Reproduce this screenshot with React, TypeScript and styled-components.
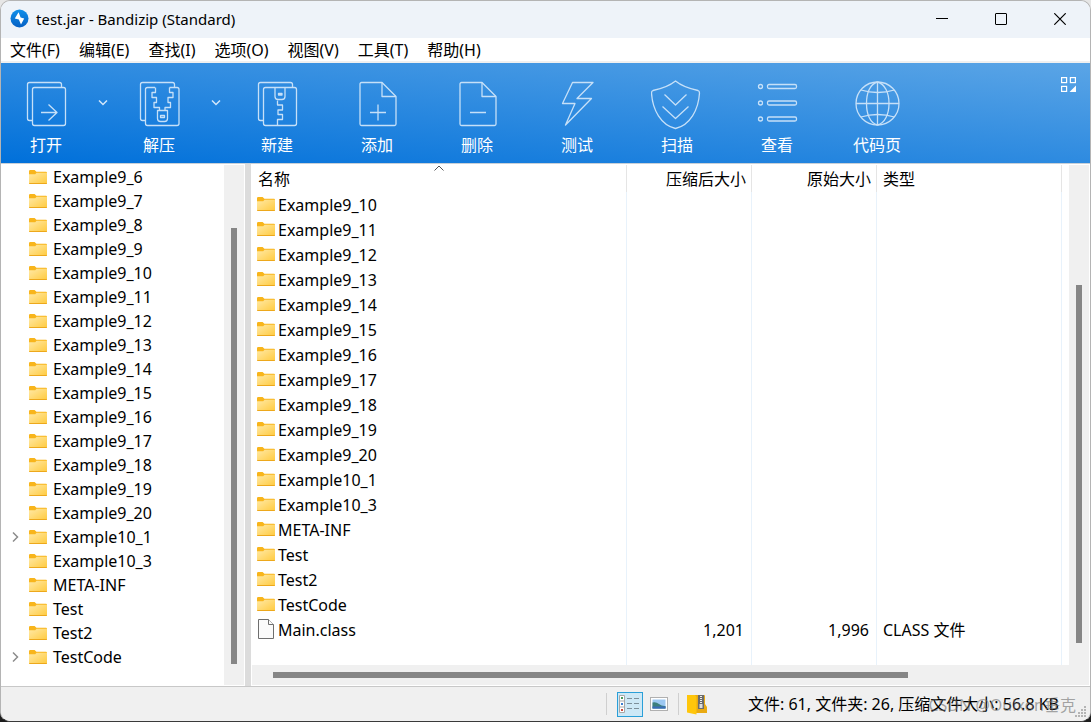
import React from "react";
import styled, { createGlobalStyle } from "styled-components";

const GlobalStyle = createGlobalStyle`
  *, *::before, *::after { box-sizing: border-box; }
  body {
    margin: 0;
    background: linear-gradient(#e6e6e6 0 50%, #1c1c1c 50% 100%);
    color: #000;
    font: 16px/24px "Noto Sans", "Noto Sans CJK SC", sans-serif;
  }
  button {
    margin: 0;
    padding: 0;
    border: 0;
    background: none;
    color: inherit;
    font: inherit;
  }
  svg { display: block; flex: none; }
`;

const Window = styled.div`
  display: flex;
  flex-direction: column;
  height: 100vh;
  overflow: hidden;
  border: 1px solid #b4b4b4;
  border-bottom-color: #3a3a3a;
  border-radius: 10px;
  background: #efefef;
`;

const TitleBar = styled.header`
  display: flex;
  align-items: center;
  flex: none;
  height: 37px;
  padding: 0 1px 2px 9px;
  background: #eef3f9;
`;

const Title = styled.h1`
  flex: 1;
  margin: 0 0 0 7px;
  font-size: 15px;
  line-height: 24px;
  font-weight: 400;
`;

const WindowButton = styled.button`
  display: grid;
  place-items: center;
  width: 59px;
  height: 34px;
`;

const MenuBar = styled.nav`
  display: flex;
  flex: none;
  gap: 1px;
  height: 25px;
  background: #fff;
  border-bottom: 2px solid #f0f0f0;
`;

const MenuItem = styled.button`
  padding: 0 9px;
  white-space: nowrap;
`;

const ToolBar = styled.div`
  display: flex;
  flex: none;
  height: 101px;
  background: linear-gradient(to top right, #0070da, #5ba5e6);
  border-bottom: 1px solid #c8d0d8;
  color: #fff;
`;

const ToolButton = styled.button<{ $narrow?: boolean }>`
  display: flex;
  flex-direction: column;
  align-items: center;
  gap: 3px;
  width: ${(p) => (p.$narrow ? 90 : 100)}px;
  padding-top: 15px;
`;

const DropButton = styled.button`
  display: grid;
  justify-items: center;
  align-content: start;
  width: 23px;
  padding-top: 36px;
`;

const LayoutButton = styled.button`
  align-self: flex-start;
  margin: 14px 14px 0 auto;
`;

const Body = styled.main`
  display: flex;
  flex: 1;
  min-height: 0;
  background: #fff;
`;

const TreePane = styled.aside`
  display: flex;
  flex: none;
  width: 244px;
  padding: 0 1px 1px 0;
`;

const Tree = styled.ul`
  flex: 1;
  margin: 0;
  padding: 1px 0 0 8px;
  list-style: none;
  overflow: hidden;
`;

const TreeItem = styled.li`
  display: flex;
  align-items: center;
  height: 24px;
`;

const Toggle = styled.span`
  display: grid;
  place-items: center;
  width: 12px;
  margin-right: 8px;
`;

const TreeLabel = styled.span`
  margin-left: 6px;
`;

const Track = styled.div<{ $before: number; $after: number; $across?: boolean }>`
  display: flex;
  flex: none;
  flex-direction: ${(p) => (p.$across ? "row" : "column")};
  ${(p) =>
    p.$across
      ? `height: 20px; padding: 7px ${p.$after}px 7px ${p.$before}px;`
      : `width: 20px; margin-top: 1px; padding: ${p.$before}px 7px ${p.$after}px;`}
  background: #f0f0f0;
`;

const Thumb = styled.div`
  flex: 1;
  background: #868686;
`;

const Splitter = styled.div`
  flex: none;
  width: 6px;
  background: #dcdcdc;
`;

const FilePane = styled.section`
  display: flex;
  flex: 1;
  min-width: 0;
  padding: 0 1px 1px;
`;

const FileColumn = styled.div`
  display: flex;
  flex: 1;
  flex-direction: column;
  min-width: 0;
`;

const ListArea = styled.div`
  flex: 1;
  min-height: 0;
  padding: 1px 7px 0 0;
  overflow: hidden;
`;

const FileTable = styled.table`
  width: 100%;
  height: 100%;
  table-layout: fixed;
  border-collapse: separate;
  border-spacing: 0;
`;

const Head = styled.th<{ $width?: number; $end?: boolean }>`
  position: relative;
  height: 27px;
  ${(p) => p.$width && `width: ${p.$width}px;`}
  padding: 1px 5px 0 6px;
  border-right: 1px solid #e5e5e5;
  font-weight: 400;
  line-height: 24px;
  text-align: ${(p) => (p.$end ? "right" : "left")};
`;

const SortMark = styled.svg`
  position: absolute;
  top: 0;
  left: calc(50% - 5px);
`;

const Cell = styled.td<{ $end?: boolean }>`
  height: 25px;
  padding: 0 7px 0 6px;
  border-right: 1px solid #e8f2fb;
  text-align: ${(p) => (p.$end ? "right" : "left")};
`;

const FillerCell = styled(Cell)`
  height: auto;
`;

const FileName = styled.span`
  display: flex;
  align-items: center;
  gap: 3px;
  height: 24px;
  margin-left: -1px;

  svg { margin-bottom: 2px; }
`;

const StatusBar = styled.footer`
  position: relative;
  display: flex;
  align-items: center;
  justify-content: flex-end;
  flex: none;
  height: 35px;
  padding-right: 31px;
  border-top: 1px solid #c8c8c8;
  background: #f0f0f0;
`;

const Divider = styled.span`
  width: 1px;
  height: 22px;
  background: #cfcfcf;
`;

const ViewButton = styled.button<{ $active?: boolean }>`
  display: grid;
  place-items: center;
  width: 26px;
  height: 25px;
  border: 1px solid ${(p) => (p.$active ? "#2a9fd8" : "transparent")};
  background: ${(p) => (p.$active ? "#cde8f6" : "transparent")};
`;

const StatusTools = styled.div`
  display: flex;
  align-items: center;
  gap: 5px;
  margin-right: 38px;
`;

const ViewSwitch = styled.div`
  display: flex;
  align-items: center;
  gap: 3px;
  margin: 0 1px 0 5px;
`;

const StatusText = styled.p`
  margin: 0;
  white-space: nowrap;
`;

const Watermark = styled.span`
  position: absolute;
  right: 14px;
  top: 6px;
  color: rgba(110, 110, 110, 0.6);
  white-space: nowrap;
`;

const ResizeGrip = styled.svg`
  position: absolute;
  right: 4px;
  bottom: 4px;
`;

const FolderIcon = () => (
  <svg width="18" height="14" viewBox="0 0 18 14" aria-hidden="true">
    <defs>
      <linearGradient id="folder" x1="0" y1="0" x2="1" y2="1">
        <stop offset="0" stopColor="#ffe9a6" />
        <stop offset="1" stopColor="#ffca3e" />
      </linearGradient>
    </defs>
    <path d="M0 1.2Q0 0 1.2 0H5.6L7.4 1.8H17Q18 1.8 18 3V6H0z" fill="#f8b51c" />
    <path d="M0 4.2H6.2L7.6 2.8H18V13.4Q18 14 17 14H1Q0 14 0 13.4z" fill="url(#folder)" />
    <path d="M0 13H18Q18 14 17 14H1Q0 14 0 13z" fill="#eda81c" />
  </svg>
);

const FileIcon = () => (
  <svg width="18" height="20" viewBox="0 0 18 20" fill="#fafafa" stroke="#6e6e6e" aria-hidden="true">
    <path d="M1.5.5H11.5L16.5 5.5V19.5H1.5z" />
    <path d="M11.5.5V5.5H16.5" />
  </svg>
);

const SheetStack = () => (
  <path d="M12.5 42.5h-3a2 2 0 0 1-2-2v-34a2 2 0 0 1 2-2h30a2 2 0 0 1 2 2v3" />
);

const Sheet = () => (
  <>
    <path d="M10.5 4.5H31L45 18.5V46a1.5 1.5 0 0 1-1.5 1.5H10.5A1.5 1.5 0 0 1 9 46V6a1.5 1.5 0 0 1 1.5-1.5" />
    <path d="M31 4.5V18.5H45" />
  </>
);

const drawings: Record<string, React.ReactNode> = {
  open: (
    <>
      <SheetStack />
      <rect x="12.5" y="9.5" width="33" height="38" rx="2" />
      <path d="M21 34.5H37M28.5 26.5L37 34.5L28.5 42.5" />
    </>
  ),
  extract: (
    <>
      <SheetStack />
      <path d="M22 9.5H14.5a2 2 0 0 0-2 2v34a2 2 0 0 0 2 2H44a2 2 0 0 0 2-2v-34a2 2 0 0 0-2-2H36.5" />
      <path d="M22.5 9.5v5h-3.5v5h4.5v5h-2.5v5h5.5v3M36.500 9.5v5h3.5v5h-5v5h2.5v5h-5.5v3" />
      <path d="M24.5 32.5h10v8a3 3 0 0 1-3 3h-4a3 3 0 0 1-3-3z" />
      <rect x="27.5" y="37.5" width="4" height="2" />
    </>
  ),
  create: (
    <>
      <SheetStack />
      <rect x="12.5" y="9.5" width="33" height="38" rx="2" />
      <path d="M24 9.5v9a3 3 0 0 0 3 3h4a3 3 0 0 0 3-3v-9" />
      <rect x="27.5" y="15.5" width="3.5" height="1.5" />
      <path d="M26.5 22.5v4.5h5v5h-4.5v4.5h4.5v5h-5v6" />
    </>
  ),
  add: (
    <>
      <Sheet />
      <path d="M19 34.5H35M27 26.5V42.5" />
    </>
  ),
  remove: (
    <>
      <Sheet />
      <path d="M19 34.5H35" />
    </>
  ),
  test: <path d="M21.5 4.5H42L26 20.5H40.5L14.5 47L24 25.5H11.5z" />,
  scan: (
    <>
      <path d="M24.5 3C19 7.5 9 11 2 12.5Q.5 13 .5 15C1.5 32 10 47 24.5 50.5C39 47 47.5 32 48.5 15Q48.5 13 47 12.5C40 11 30 7.5 24.5 3z" />
      <path d="M13.5 16.5L24.5 27L35.5 16.5M11.500 28.5L24.5 40.5L37.5 28.5" />
    </>
  ),
  view: (
    <>
      {[8.5, 25, 41].map((y) => (
        <g key={y}>
          <circle cx="9.5" cy={y} r="2" />
          <rect x="16.5" y={y - 2} width="29" height="4" rx="1.5" />
        </g>
      ))}
    </>
  ),
  codepage: (
    <>
      <circle cx="26.5" cy="25.5" r="21.5" />
      <path d="M26.5 4V47M5 25.5H48" />
      <path d="M26.5 4C19 6 15.5 15 15.5 25.5S19 45 26.5 47M26.5 4C34 6 38 15 38 25.5S34 45 26.5 47" />
      <path d="M10 12Q26.5 17 43.5 12M10 39Q26.5 34 43.5 39" />
    </>
  ),
};

const ToolIcon = ({ name }: { name: string }) => (
  <svg
    width="52"
    height="52"
    viewBox="0 0 52 52"
    fill="none"
    stroke="#c6e0f8"
    strokeWidth="1.3"
    strokeLinejoin="round"
    aria-hidden="true"
  >
    {drawings[name]}
  </svg>
);

const menus = ["文件(F)", "编辑(E)", "查找(I)", "选项(O)", "视图(V)", "工具(T)", "帮助(H)"];

const tools = [
  { name: "open", label: "打开", drop: true },
  { name: "extract", label: "解压", drop: true },
  { name: "create", label: "新建" },
  { name: "add", label: "添加" },
  { name: "remove", label: "删除" },
  { name: "test", label: "测试" },
  { name: "scan", label: "扫描" },
  { name: "view", label: "查看" },
  { name: "codepage", label: "代码页" },
];

const range = (from: number, to: number) =>
  Array.from({ length: to - from + 1 }, (_, i) => `Example9_${from + i}`);

const tail = ["Example10_1", "Example10_3", "META-INF", "Test", "Test2", "TestCode"];
const treeFolders = [...range(6, 20), ...tail];
const listFolders = [...range(10, 20), ...tail];
const expandable = ["Example10_1", "TestCode"];

export default function App() {
  return (
    <>
      <GlobalStyle />
      <Window>
        <TitleBar>
          <svg width="19" height="19" viewBox="0 0 19 19" aria-hidden="true">
            <defs>
              <linearGradient id="logo" x1="0" y1="0" x2="0" y2="1">
                <stop offset="0" stopColor="#1090ea" />
                <stop offset="1" stopColor="#0560c4" />
              </linearGradient>
            </defs>
            <circle cx="9.5" cy="9.5" r="9" fill="url(#logo)" />
            <path d="M8.6 3.2L4.8 9.4L8.8 10.4L11 15.6L14.2 9.4L10.6 8.4z" fill="#fff" />
          </svg>
          <Title>test.jar - Bandizip (Standard)</Title>
          <WindowButton aria-label="最小化">
            <svg width="12" height="12" viewBox="0 0 12 12" stroke="#000">
              <path d="M0 5.5H12" />
            </svg>
          </WindowButton>
          <WindowButton aria-label="最大化">
            <svg width="12" height="12" viewBox="0 0 12 12" fill="none" stroke="#000">
              <rect x=".5" y=".5" width="11" height="11" rx=".5" />
            </svg>
          </WindowButton>
          <WindowButton aria-label="关闭">
            <svg width="12" height="12" viewBox="0 0 12 12" stroke="#000" strokeWidth="1.2">
              <path d="M.3.3L11.7 11.7M11.7.3L.3 11.7" />
            </svg>
          </WindowButton>
        </TitleBar>

        <MenuBar>
          {menus.map((m) => (
            <MenuItem key={m}>{m}</MenuItem>
          ))}
        </MenuBar>

        <ToolBar>
          {tools.map((t) => (
            <React.Fragment key={t.name}>
              <ToolButton $narrow={t.drop}>
                <ToolIcon name={t.name} />
                {t.label}
              </ToolButton>
              {t.drop && (
                <DropButton aria-label={`${t.label}选项`}>
                  <svg width="10" height="8" viewBox="0 0 10 8" fill="none" stroke="#d3e7fa" strokeWidth="1.5">
                    <path d="M1 1.5L5 5.5L9 1.5" />
                  </svg>
                </DropButton>
              )}
            </React.Fragment>
          ))}
          <LayoutButton aria-label="布局">
            <svg width="15" height="15" viewBox="0 0 15 15" fill="none" stroke="#fff" strokeWidth="1.2">
              <rect x=".6" y=".6" width="5" height="5" />
              <rect x="9.4" y=".6" width="5" height="5" />
              <rect x=".6" y="9.4" width="5" height="5" />
              <path d="M15 8.5V15H8.5z" fill="#fff" stroke="none" />
            </svg>
          </LayoutButton>
        </ToolBar>

        <Body>
          <TreePane>
            <Tree>
              {treeFolders.map((name) => (
                <TreeItem key={name}>
                  <Toggle>
                    {expandable.includes(name) && (
                      <svg width="7" height="12" viewBox="0 0 7 12" fill="none" stroke="#8c8c8c" strokeWidth="1.5">
                        <path d="M1 1.5L5.5 6L1 10.5" />
                      </svg>
                    )}
                  </Toggle>
                  <FolderIcon />
                  <TreeLabel>{name}</TreeLabel>
                </TreeItem>
              ))}
            </Tree>
            <Track $before={63} $after={21}>
              <Thumb />
            </Track>
          </TreePane>
          <Splitter />
          <FilePane>
            <FileColumn>
              <ListArea>
                <FileTable>
                  <thead>
                    <tr>
                      <Head>
                        名称
                        <SortMark width="10" height="6" viewBox="0 0 10 6" fill="none" stroke="#555">
                          <path d="M.5 5.5L5 1L9.5 5.5" />
                        </SortMark>
                      </Head>
                      <Head $width={125} $end>压缩后大小</Head>
                      <Head $width={125} $end>原始大小</Head>
                      <Head $width={185}>类型</Head>
                    </tr>
                  </thead>
                  <tbody>
                    {listFolders.map((name) => (
                      <tr key={name}>
                        <Cell>
                          <FileName>
                            <FolderIcon />
                            {name}
                          </FileName>
                        </Cell>
                        <Cell />
                        <Cell />
                        <Cell />
                      </tr>
                    ))}
                    <tr>
                      <Cell>
                        <FileName>
                          <FileIcon />
                          Main.class
                        </FileName>
                      </Cell>
                      <Cell $end>1,201</Cell>
                      <Cell $end>1,996</Cell>
                      <Cell>CLASS 文件</Cell>
                    </tr>
                    <tr aria-hidden="true">
                      <FillerCell />
                      <FillerCell />
                      <FillerCell />
                      <FillerCell />
                    </tr>
                  </tbody>
                </FileTable>
              </ListArea>
              <Track $across $before={21} $after={161}>
                <Thumb />
              </Track>
            </FileColumn>
            <Track $before={120} $after={42}>
              <Thumb />
            </Track>
          </FilePane>
        </Body>

        <StatusBar>
          <StatusTools>
            <Divider />
            <ViewSwitch>
              <ViewButton $active aria-label="详细信息">
                <svg width="22" height="18" viewBox="0 0 22 18" aria-hidden="true">
                  <path d="M.5.5h5v17h-5zM.5 6h5M.5 12h5" fill="#fff" stroke="#a8a8a8" />
                  <path d="M2 3h2" stroke="#4a9a5a" strokeWidth="2" />
                  <path d="M2 9h2" stroke="#3c7fd0" strokeWidth="2" />
                  <path d="M2 15h2" stroke="#d04a3c" strokeWidth="2" />
                  <path d="M8 3.5h5M15 3.5h5M8 8.5h5M15 8.5h5M8 13.5h5M15 13.5h5" stroke="#7d8f9a" />
                </svg>
              </ViewButton>
              <ViewButton aria-label="缩略图">
                <svg width="18" height="14" viewBox="0 0 18 14" aria-hidden="true">
                  <rect x=".5" y=".5" width="17" height="13" fill="#fff" stroke="#b0b0b0" />
                  <rect x="2.5" y="2.5" width="13" height="9" fill="#9cc8f2" />
                  <path d="M2.5 5.5Q6 4.5 9 7T15.5 9V11.5H2.5z" fill="#3d7f7c" />
                  <path d="M2.500 9.500H15.500V11.500H2.500z" fill="#3a6cba" />
                </svg>
              </ViewButton>
            </ViewSwitch>
            <Divider />
            <ViewButton aria-label="压缩包">
              <svg width="20" height="21" viewBox="0 0 20 21" aria-hidden="true">
                <path d="M7 1H17Q18 1 18 2V10L20 13V19H7z" fill="#e9aa12" />
                <path d="M0 1H8L9.5 3V20.5L7 20L0 18.5z" fill="#ffc60b" />
                <rect x="11" y="1" width="6" height="14" fill="#6c6c6c" />
                <path d="M14 2V9" stroke="#eee" strokeWidth="2" strokeDasharray="1 1" />
                <rect x="12.5" y="10" width="3" height="4" fill="#ddd" />
              </svg>
            </ViewButton>
          </StatusTools>
          <StatusText>文件: 61, 文件夹: 26, 压缩文件大小: 56.8 KB</StatusText>
          <Watermark>CSDN @Oulxon垂克</Watermark>
          <ResizeGrip width="11" height="11" viewBox="0 0 11 11" fill="#b4b4b4">
            <path d="M9 0h2v2h-2zM9 3h2v2h-2zM9 6h2v2h-2zM9 9h2v2h-2zM6 3h2v2h-2zM6 6h2v2h-2zM6 9h2v2h-2zM3 6h2v2h-2zM3 9h2v2h-2zM0 9h2v2h-2z" />
          </ResizeGrip>
        </StatusBar>
      </Window>
    </>
  );
}
